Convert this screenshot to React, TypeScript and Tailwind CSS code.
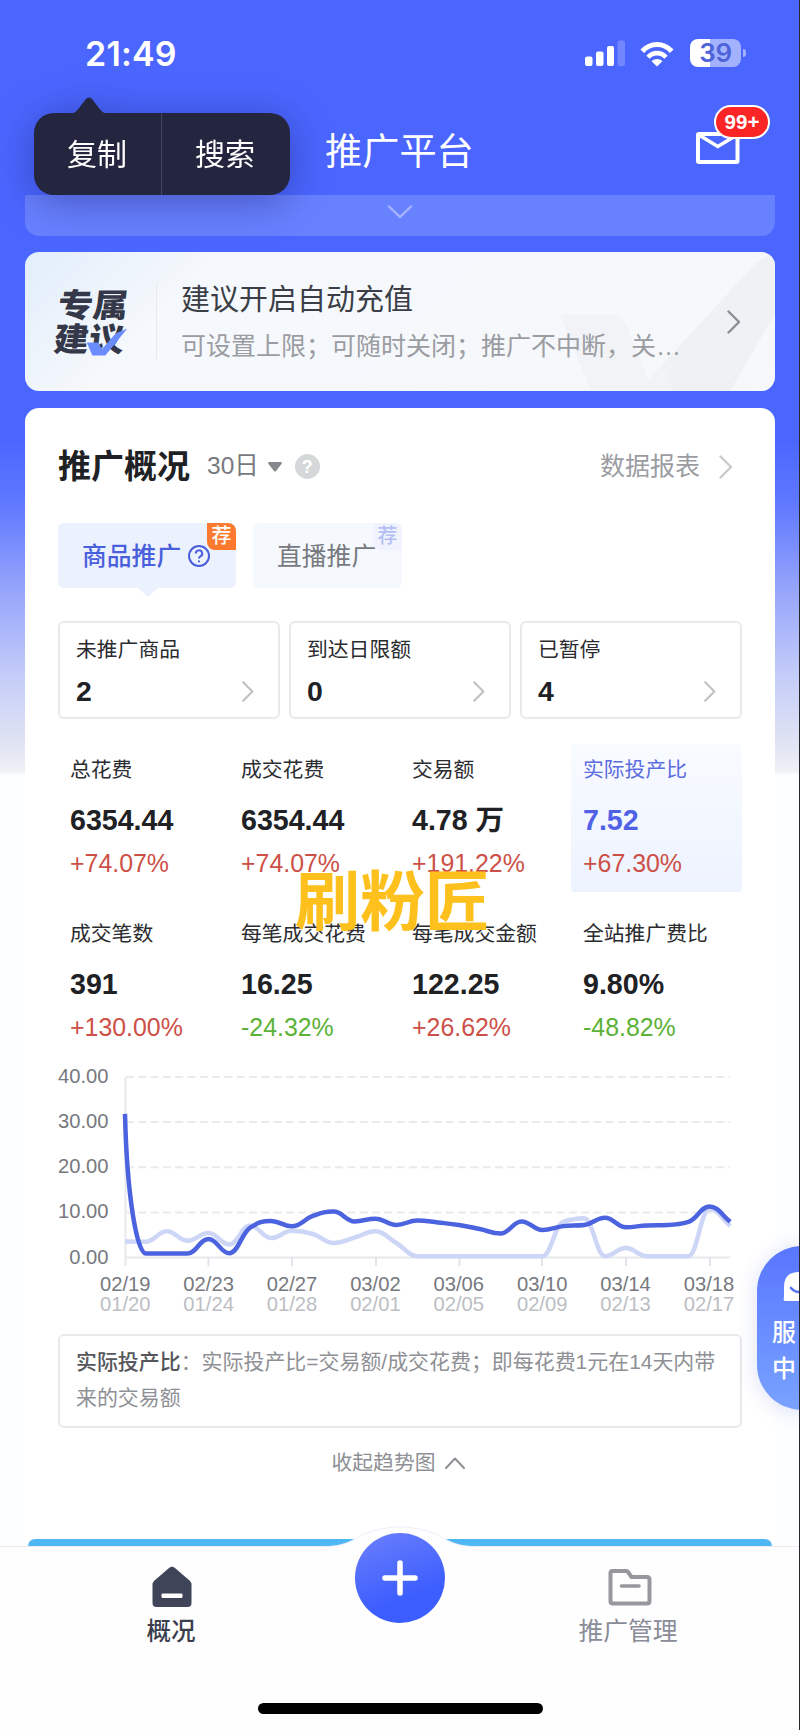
import React from "react";
import clsx from "clsx";

interface Metric {
  label: string;
  value: string;
  change: string;
  active?: boolean;
}

const shortcuts = [
  { label: "未推广商品", value: "2" },
  { label: "到达日限额", value: "0" },
  { label: "已暂停", value: "4" },
];

const metrics: Metric[] = [
  { label: "总花费", value: "6354.44", change: "+74.07%" },
  { label: "成交花费", value: "6354.44", change: "+74.07%" },
  { label: "交易额", value: "4.78 万", change: "+191.22%" },
  { label: "实际投产比", value: "7.52", change: "+67.30%", active: true },
  { label: "成交笔数", value: "391", change: "+130.00%" },
  { label: "每笔成交花费", value: "16.25", change: "-24.32%" },
  { label: "每笔成交金额", value: "122.25", change: "+26.62%" },
  { label: "全站推广费比", value: "9.80%", change: "-48.82%" },
];

const yLabels = ["40.00", "30.00", "20.00", "10.00", "0.00"];

const xLabels = [
  ["02/19", "01/20"],
  ["02/23", "01/24"],
  ["02/27", "01/28"],
  ["03/02", "02/01"],
  ["03/06", "02/05"],
  ["03/10", "02/09"],
  ["03/14", "02/13"],
  ["03/18", "02/17"],
];

// 30 days, current period and the one before it
const current = [
  31.8, 0.9, 0.9, 0.9, 4.1, 0.95, 6.6, 8.1, 6.9, 9.2, 10.2, 8, 8.6, 7.2, 8.2, 7.75, 7.2, 6.3, 5.3,
  8, 6.1, 6.95, 7.2, 8.8, 6.7, 7.1, 7.2, 7.9, 11.3, 7.9,
];
const previous = [
  3.6, 3.5, 5.8, 3.7, 5.4, 2.9, 7.1, 4.3, 5.9, 5.2, 3.2, 4.4, 5.8, 3.2, 0.3, 0.3, 0.3, 0.3, 0.3,
  0.3, 0.3, 7.9, 8.7, 0.3, 2.1, 0.3, 0.3, 0.3, 10.7, 7,
];

const STEP = 20.87;

// monotone cubic through the daily values
const linePath = (values: number[]) => {
  const pts = values.map((v, i) => [4 + i * STEP, 190.5 - v * 4.515]);
  const slope = (i: number) => (pts[i + 1][1] - pts[i][1]) / STEP;
  const tangents = pts.map((_, i) => {
    if (i === 0) return 0;
    if (i === pts.length - 1) return slope(i - 1) * 1.1;
    const a = slope(i - 1);
    const b = slope(i);
    if (a * b <= 0) return 0;
    return Math.sign(a) * Math.min(2 * Math.abs(a), 2 * Math.abs(b), Math.abs(a + b) / 2);
  });
  return pts
    .map(([x, y], i) => {
      if (i === 0) return `M${x} ${y}`;
      const [px, py] = pts[i - 1];
      const d = STEP * 0.42;
      // the first drop starts almost vertical
      if (i === 1) return `C${px + 2} ${py + (y - py) * 0.6} ${x - d} ${y} ${x} ${y}`;
      return `C${px + d} ${py + tangents[i - 1] * d} ${x - d} ${y - tangents[i] * d} ${x} ${y}`;
    })
    .join("");
};

const Chevron = ({ className }: { className?: string }) => (
  <svg viewBox="0 0 14 24" fill="none" className={clsx("h-6 w-3.5", className)}>
    <path d="M1.5 1.5 12 12 1.5 22.5" stroke="currentColor" strokeWidth="2.4" strokeLinecap="round" strokeLinejoin="round" />
  </svg>
);

const StatusBar = () => (
  <div className="flex h-[97px] items-start justify-between pl-[85px] pr-[54px] text-white">
    <span className="mt-[34px] font-['Inter'] text-[34px] font-semibold leading-10 tracking-[0.2px]">21:49</span>
    <div className="mt-[39px] flex h-7 items-center">
      <svg viewBox="0 0 41 28" className="h-7 w-[41px]" fill="white">
        <rect x="0" y="17.500" width="7.500" height="9.500" rx="2" />
        <rect x="11" y="12.500" width="7.500" height="14.500" rx="2" />
        <rect x="22" y="7" width="7" height="20" rx="2" />
        <rect x="32.500" y="1.500" width="7.500" height="25.500" rx="2" fillOpacity="0.22" />
      </svg>
      <svg viewBox="0 0 34 26" className="relative top-px ml-[14px] h-[26px] w-[34px]" fill="none" stroke="white">
        <path d="M2.3 10.2C10.5 1.2 23.5 1.2 31.7 10.2" strokeWidth="5" />
        <path d="M8 16.2C13 10.8 21 10.8 26 16.2" strokeWidth="4.6" />
        <path d="M17 25.5 11.6 20.3C14.6 17.2 19.4 17.2 22.4 20.3Z" fill="white" stroke="none" />
      </svg>
      <div className="ml-4 flex items-center">
        <div className="flex h-7 w-[51px] items-center justify-center rounded-lg bg-[linear-gradient(90deg,#fff_0_20px,#a3b2ff_20px)] font-['Inter'] text-[26px] font-semibold leading-7 tracking-[-0.3px] text-[#4f63d8]">
          39
        </div>
        <div className="ml-0.5 h-2 w-[3px] rounded-r-full bg-[#a3b2ff]" />
      </div>
    </div>
  </div>
);

const Header = () => (
  <div className="flex h-[98px] items-start text-white">
    <h1 className="ml-[325px] mt-[31px] text-[37.2px] leading-[48px]">推广平台</h1>
    <div className="relative ml-auto mr-[60px] mt-[35px]">
      <svg viewBox="0 0 44 32" className="h-8 w-11" fill="none" stroke="white" strokeWidth="4">
        <rect x="2" y="2" width="39.5" height="28" rx="1" />
        <path d="M3 3 21.8 14.500 41 3" strokeWidth="3.6" />
      </svg>
      <span className="absolute -top-[27px] left-[18px] flex h-[34px] w-[56px] items-center justify-center rounded-full border-2 border-white bg-[#fb2525] text-[20.5px] font-bold leading-none">
        99+
      </span>
    </div>
  </div>
);

const ContextMenu = () => (
  <div className="absolute left-[33.5px] top-[97px] z-20 w-64 text-[30px] text-white drop-shadow-[0_6px_20px_rgba(25,30,110,0.45)]">
    <svg viewBox="0 0 40 17" className="ml-[35px] block h-[17px] w-10" fill="#24253e">
      <path d="M0 17C7 17 9 12 17 2Q20-1 23 2C31 12 33 17 40 17Z" />
    </svg>
    <div className="-mt-px flex h-[82px] rounded-[20px] bg-[#24253e] leading-[83px]">
      <span className="w-[128px] border-r border-[#42455f] text-center">复制</span>
      <span className="w-[128px] pr-px text-center">搜索</span>
    </div>
  </div>
);

const SuggestionCard = () => (
  <section className="relative mx-[25px] mt-4 flex h-[139px] items-center overflow-hidden rounded-[14px] bg-[linear-gradient(135deg,#e2eefb_0%,#f5f8fc_22%,#f6f8fb_100%)]">
    <svg viewBox="0 0 230 139" className="absolute right-0 top-0 h-[139px] w-[230px]">
      <path d="M15 63H70Q78 63 82 75L103 128 120 110 210 12 165 139H46Z" fill="#f1f3f6" />
      <path d="M118 112 212 10 230 0V62L185 139H128Z" fill="#eff1f5" />
    </svg>
    <div className="relative ml-[31px] mt-[3px] w-[72px] -skew-x-6 scale-y-[0.93] text-[35px] font-black leading-9 text-[#343848]">
      <div>专属</div>
      <div>建议</div>
      <svg viewBox="0 0 40 30" className="absolute bottom-0 left-[33px] h-[30px] w-10">
        <path d="M0 15H11L16 22 28 5 39 0 20 29H7Z" fill="#6a8cff" />
      </svg>
    </div>
    <div className="ml-[28px] h-[78px] w-px bg-[#e6e9ef]" />
    <div className="relative ml-[24px] mt-[3px] w-[510px]">
      <p className="text-[29px] leading-[46px] text-[#3b3e46]">建议开启自动充值</p>
      <p className="whitespace-nowrap text-[25px] leading-[46px] text-[#9a9ca2]">可设置上限；可随时关闭；推广不中断，关…</p>
    </div>
    <Chevron className="relative ml-auto mr-[34px] text-[#8c8e93]" />
  </section>
);

const Tabs = () => (
  <div className="mt-[33px] flex gap-[17px] text-[24.8px] leading-[67px]">
    <div className="relative flex h-[65px] w-[178px] rounded-md bg-[#ecf1fe] pl-[24px] font-medium text-[#4a5fdc]">
      商品推广
      <svg viewBox="0 0 24 24" className="ml-[6px] mt-[20.5px] h-6 w-6" fill="none" stroke="currentColor" strokeWidth="2">
        <circle cx="12" cy="12" r="10" />
        <path d="M8.8 9.6a3.2 3.2 0 1 1 4.6 2.8c-1 .5-1.4 1-1.4 2.1M12 16.4v1.8" />
      </svg>
      <span className="absolute right-0 top-0 h-[27px] w-[29px] rounded-bl-lg rounded-tr-lg bg-[#fb7a30] text-center text-[20px] font-medium leading-[27px] text-white">
        荐
      </span>
      <svg viewBox="0 0 22 10" className="absolute left-[79px] top-[64px] h-2.5 w-[22px]">
        <path d="M0 0H22L13 8.5Q11 10 9 8.5Z" fill="#ecf1fe" />
      </svg>
    </div>
    <div className="relative h-[65px] w-[149px] rounded-md bg-[#f5f8fd] pl-[24px] text-[#77797e]">
      直播推广
      <span className="absolute right-0 top-0 h-[27px] w-[29px] rounded-bl-lg rounded-tr-lg bg-[#f0f3fd] text-center text-[20px] font-medium leading-[27px] text-[#b4bff5]">
        荐
      </span>
    </div>
  </div>
);

const Trend = () => (
  <div className="mt-[7px] flex">
    <div className="w-[52px] pt-[2px] text-right text-[20.2px] leading-[22px] text-[#77797e]">
      {yLabels.map((y) => (
        <div key={y} className="mb-[23.15px]">
          {y}
        </div>
      ))}
    </div>
    <div className="-ml-[2px] mt-1 w-[640px]">
      <svg viewBox="-14 0 640 206" className="block h-[206px] w-[640px]" fill="none">
        {[10, 55.1, 100.3, 145.4].map((y) => (
          <path key={y} d={`M5 ${y}H609`} stroke="#e9eaec" strokeWidth="2" strokeDasharray="8 4.3" />
        ))}
        <path d="M4.5 10V199M4 190.5H609" stroke="#e8e9ec" strokeWidth="2" />
        {[87.5, 171, 255, 338.5, 421, 505, 589].map((x) => (
          <path key={x} d={`M${x} 190V199`} stroke="#e3e4e8" strokeWidth="2" />
        ))}
        <path d={linePath(previous)} stroke="#cdd6f6" strokeWidth="4.5" strokeLinejoin="round" />
        <path d={linePath(current)} stroke="#4c63e0" strokeWidth="4.5" strokeLinejoin="round" />
      </svg>
      <div className="-ml-[23px] mt-[0.5px] flex">
        {xLabels.map(([day, before]) => (
          <div key={day} className="w-[83.4px] shrink-0 text-center text-[20.2px] leading-5">
            <div className="text-[#77797e]">{day}</div>
            <div className="text-[#bcbec3]">{before}</div>
          </div>
        ))}
      </div>
    </div>
  </div>
);

const Overview = () => (
  <section className="mx-[25px] mt-[17px] h-[1131px] rounded-t-[14px] bg-white px-[33px] pt-[36px]">
    <div className="flex h-[46px] items-center pb-px">
      <h2 className="text-[33px] font-bold leading-[46px] text-[#202124]">推广概况</h2>
      <span className="ml-[17px] text-[24.5px] text-[#77797e]">30日</span>
      <svg viewBox="0 0 14 10" className="ml-[9px] h-2.5 w-3.5" fill="#85878c">
        <path d="M1 0H13Q14.5.5 13.5 2L8 9Q7 10 6 9L.5 2Q-.5.5 1 0Z" />
      </svg>
      <span className="ml-[13px] flex h-[25px] w-[25px] items-center justify-center rounded-full bg-[#d5d8d9] text-[18px] font-bold leading-none text-white">
        ?
      </span>
      <span className="ml-auto text-[25px] text-[#9a9ca2]">数据报表</span>
      <Chevron className="ml-[19px] mr-[9px] text-[#c9cbcf]" />
    </div>

    <Tabs />

    <div className="mt-[33px] flex gap-[9px]">
      {shortcuts.map((s) => (
        <div key={s.label} className="h-[98px] w-[222px] rounded-md border-2 border-[#e9e9eb] pl-4 pr-[23px] pt-[10.5px]">
          <p className="text-[20.8px] leading-8 text-[#2b2c30]">{s.label}</p>
          <div className="mt-[10px] flex h-8 items-center justify-between">
            <span className="text-[28.4px] font-bold text-[#202124]">{s.value}</span>
            <Chevron className="h-[21px] w-3 text-[#bfc1c5]" />
          </div>
        </div>
      ))}
    </div>

    <div className="mt-[25px] grid grid-cols-[171px_171px_171px_171px] gap-y-4">
      {metrics.map((m) => (
        <div
          key={m.label}
          className={clsx(
            "h-[148px] rounded pl-3 pt-2.5",
            m.active && "bg-linear-to-b from-[#f8fbff] to-[#edf3ff]"
          )}
        >
          <p className={clsx("text-[20.8px] leading-8", m.active ? "text-[#5b6be0]" : "text-[#2b2c30]")}>{m.label}</p>
          <p className={clsx("mt-[18px] h-8 text-[28.6px] font-bold leading-8", m.active ? "text-[#4f62e6]" : "text-[#202124]")}>
            {m.value}
          </p>
          <p
            className={clsx(
              "mt-[11px] text-[24.9px] leading-8",
              m.change.startsWith("+") ? "text-[#cd5048]" : "text-[#5bb236]"
            )}
          >
            {m.change}
          </p>
        </div>
      ))}
    </div>

    <Trend />

    <div className="mt-5 h-[94px] rounded-md border-2 border-[#e9e9eb] pl-4 pt-[8px] text-[20.95px] leading-[36.5px] text-[#8e9095]">
      <p className="whitespace-nowrap">
        <b className="font-medium text-[#55575c]">实际投产比</b>：实际投产比=交易额/成交花费；即每花费1元在14天内带
      </p>
      <p>来的交易额</p>
    </div>

    <div className="mt-[17px] flex items-center justify-center pr-[3px] text-[20.8px] leading-9 text-[#8e9095]">
      收起趋势图
      <svg viewBox="0 0 20 12" className="ml-[10px] h-3 w-5" fill="none">
        <path d="M1 11 10 1.5 19 11" stroke="currentColor" strokeWidth="2" strokeLinecap="round" strokeLinejoin="round" />
      </svg>
    </div>
  </section>
);

const ServiceButton = () => (
  <div className="absolute left-[757px] top-[1246px] z-20 h-[164px] w-[90px] rounded-[45px] bg-linear-to-b from-[#5a75ff] to-[#79a2ff] pl-[15px] pt-[26px] text-[24px] font-medium leading-9 text-white shadow-[0_2px_20px_rgba(80,100,220,0.2)]">
    <svg viewBox="0 0 40 30" className="ml-[11px] h-[30px] w-10">
      <path d="M16 0Q34 0 34 15T18 29H2Q0 29 1 25V15Q1 0 16 0Z" fill="white" />
      <path d="M8 16Q15 24 24 16" fill="none" stroke="#5a75f5" strokeWidth="2.6" strokeLinecap="round" />
    </svg>
    <div className="mt-[13px]">服</div>
    <div>中</div>
  </div>
);

const BottomNav = () => (
  <nav className="relative h-[184px] border-t border-[#ececf0] bg-[#fefeff]">
    <svg viewBox="0 0 160 24" className="absolute left-[320px] -top-[21px] h-6 w-40">
      <path d="M5 20.5C26 20.5 34 13 44 8Q61 1 80 1T116 8C126 13 134 20.5 155 20.5V24H5Z" fill="#fefeff" stroke="#eeeefb" strokeWidth="1" />
      <path d="M0 21.5H160V24H0Z" fill="#fefeff" />
    </svg>
    <div className="flex">
      <div className="ml-[122px] flex w-[100px] flex-col items-center text-[24.5px] font-medium text-[#3a3d4c]">
        <svg viewBox="0 0 40 42" className="mt-[19px] h-[42px] w-10" fill="#404458">
          <path d="M17 2Q20-.5 23 2L37.500 14.500Q39.500 16.500 39.500 18.500V37Q39.500 41 35.500 41H4.500Q.5 41 .5 37V18.500Q.5 16.500 2.500 14.500Z" />
          <rect x="9.500" y="27.500" width="21" height="4.500" rx="1.200" fill="white" />
        </svg>
        <span className="mt-[6px] -ml-0.5 leading-9">概况</span>
      </div>
      <div className="relative -mt-[14px] ml-[133px] flex h-[90px] w-[90px] items-center justify-center rounded-full bg-[linear-gradient(160deg,#6b80fb_0%,#3c5dff_70%)]">
        <svg viewBox="0 0 36 36" className="h-9 w-9">
          <path d="M18 3V33M3 18H33" stroke="white" strokeWidth="5.500" strokeLinecap="round" />
        </svg>
      </div>
      <div className="ml-[123px] flex w-[120px] flex-col items-center text-[24.8px] text-[#8a8c98]">
        <svg viewBox="0 0 44 38" className="ml-[3px] mt-[21px] h-[38px] w-11" fill="none" stroke="#96989d" strokeWidth="4" strokeLinejoin="round">
          <path d="M4.500 3H18Q19.500 3 20 4L23.500 9H39Q41.500 9 41.500 11.500V33Q41.500 35.500 39 35.500H5Q2.500 35.500 2.500 33V5Q2.500 3 4.500 3Z" />
          <path d="M13.500 18H31" strokeLinecap="round" strokeWidth="3.600" />
        </svg>
        <span className="mt-[8px] leading-9">推广管理</span>
      </div>
    </div>
    <div className="absolute bottom-4 left-[258px] h-[11px] w-[285px] rounded-full bg-black" />
  </nav>
);

export default function App() {
  return (
    <div className="relative h-[1730px] w-[800px] overflow-hidden bg-[linear-gradient(180deg,#4b66ff_0,#4b66ff_440px,#6079ff_505px,#96a5fb_590px,#c6cef8_680px,#e3e6f3_750px,#f0f2f6_772px,#fdfeff_775px)] font-['Liberation_Sans','Noto_Sans_CJK_SC',sans-serif]">
      <StatusBar />
      <Header />
      <div className="mx-[25px] flex h-[41px] justify-center rounded-b-[14px] bg-[#6881ff] pt-2.5 text-[#a7b5ff]">
        <svg viewBox="0 0 26 14" className="h-3.5 w-[26px]" fill="none">
          <path d="M2 1.500 13 12 24 1.500" stroke="currentColor" strokeWidth="2.400" strokeLinecap="round" strokeLinejoin="round" />
        </svg>
      </div>
      <SuggestionCard />
      <Overview />
      <div className="mx-[28px] h-[7px] rounded-t-[10px] bg-[#4fb8f4]" />
      <BottomNav />

      <ContextMenu />
      <ServiceButton />
      <div className="absolute left-[295px] top-[863px] z-10 whitespace-nowrap text-[65px] font-bold leading-[80px] text-[#fdc01c]">刷粉匠</div>
      <div className="absolute right-0 top-0 z-30 h-full w-px bg-[#26282e]" />
    </div>
  );
}
